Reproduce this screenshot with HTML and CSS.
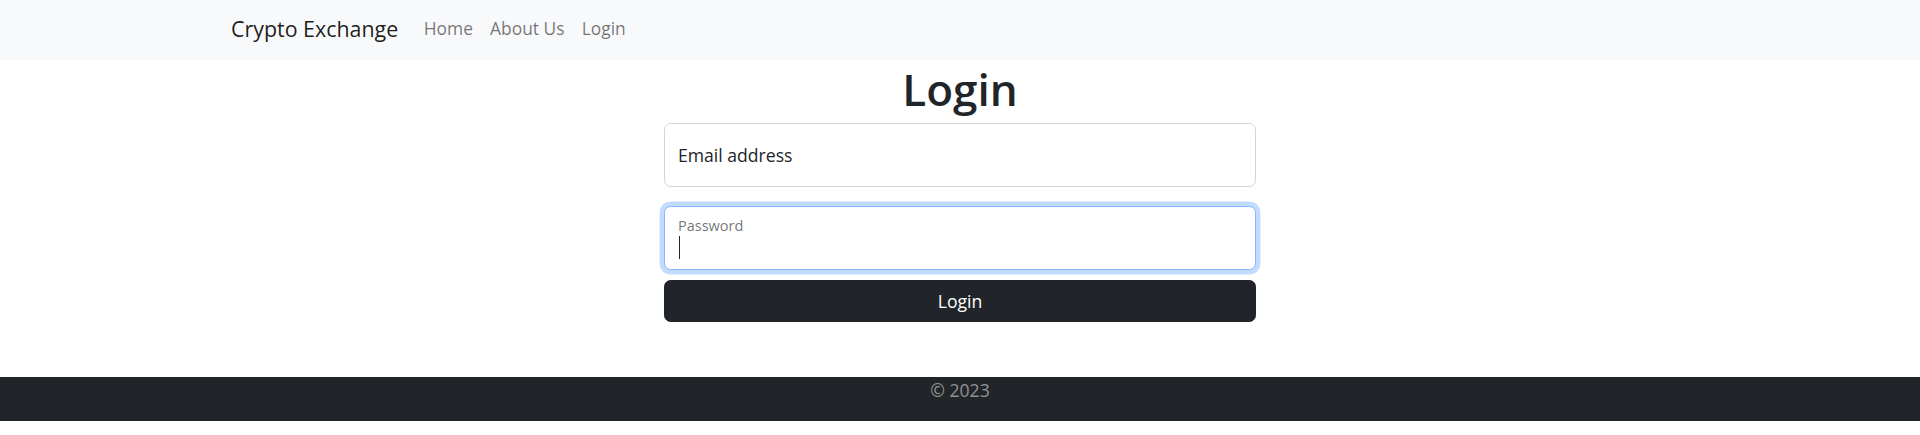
FILE: index.html
```html
<!DOCTYPE html>
<html lang="en">
<head>
<meta charset="utf-8">
<title>Login - Crypto Exchange</title>
<link rel="stylesheet" href="styles.css">
</head>
<body>
<header class="navbar">
  <div class="navbar-inner">
    <a class="brand" href="#">Crypto Exchange</a>
    <ul class="nav">
      <li><a class="nav-link" href="#">Home</a></li>
      <li><a class="nav-link" href="#">About Us</a></li>
      <li><a class="nav-link" href="#">Login</a></li>
    </ul>
  </div>
</header>
<main class="main">
  <h1 class="title">Login</h1>
  <form class="form">
    <div class="field field-email">
      <input class="input" type="email" id="email">
      <label class="label" for="email">Email address</label>
    </div>
    <div class="field field-password">
      <input class="input input-focus" type="password" id="password">
      <label class="label label-float" for="password">Password</label>
      <span class="caret"></span>
    </div>
    <button class="btn" type="button">Login</button>
  </form>
</main>
<footer class="footer">
  <p class="footer-text">© 2023</p>
</footer>
</body>
</html>
```
FILE: styles.css
```css
* { box-sizing: border-box; }

body {
  margin: 0;
  background: #fff;
  color: #212529;
  font-family: "Open Sans", "Noto Sans", sans-serif;
  font-size: 17.6px;
  line-height: 1.5;
}

.navbar {
  background: #f8f9fa;
  height: 60px;
  padding-bottom: 3px;
}

.navbar-inner {
  max-width: 1458px;
  height: 100%;
  margin: 0 auto;
  display: flex;
  align-items: center;
}

.brand {
  font-size: 21.4px;
  line-height: 30px;
  color: rgba(0, 0, 0, 0.9);
  text-decoration: none;
  margin-right: 17px;
}

.nav {
  display: flex;
  list-style: none;
  margin: 0;
  padding: 0;
}

.nav-link {
  display: block;
  padding: 7px 8.6px;
  font-size: 17.4px;
  line-height: 26.4px;
  color: rgba(0, 0, 0, 0.55);
  text-decoration: none;
}

.main {
  width: 592px;
  margin: 0 auto;
  padding-bottom: 55px;
}

.title {
  margin: 3px 0 7px;
  font-size: 44px;
  font-weight: 600;
  line-height: 52.8px;
  text-align: center;
}

.form {
  display: flex;
  flex-direction: column;
}

.field {
  position: relative;
}

.field-email { margin-bottom: 19px; }
.field-password { margin-bottom: 10px; }

.input {
  display: block;
  width: 100%;
  height: 64px;
  margin: 0;
  padding: 26px 13px 10px;
  border: 1px solid #ced4da;
  border-radius: 6.6px;
  background: #fff;
  font: inherit;
  color: #212529;
  outline: none;
}

.input-focus {
  border-color: #86b7fe;
  box-shadow: 0 0 0 4.4px rgba(13, 110, 253, 0.25);
}

.label {
  position: absolute;
  top: 0;
  left: 0;
  padding: 18px 13px;
  border: 1px solid transparent;
  line-height: 26.4px;
  color: #212529;
  pointer-events: none;
}

.label-float {
  padding: 9px 13px;
  font-size: 14.5px;
  line-height: 20px;
  color: rgba(33, 37, 41, 0.65);
}

.caret {
  position: absolute;
  left: 15px;
  top: 30px;
  width: 1px;
  height: 23px;
  background: #212529;
}

.btn {
  display: flex;
  align-items: center;
  justify-content: center;
  width: 100%;
  height: 42px;
  margin: 0;
  padding: 0;
  border: 1px solid #212529;
  border-radius: 6.6px;
  background: #212529;
  color: #fff;
  font: inherit;
  line-height: 26.4px;
  cursor: pointer;
}

.footer {
  background: #212529;
  text-align: center;
}

.footer-text {
  margin: 0;
  padding-bottom: 18px;
  line-height: 26.4px;
  color: rgba(255, 255, 255, 0.5);
}
```
